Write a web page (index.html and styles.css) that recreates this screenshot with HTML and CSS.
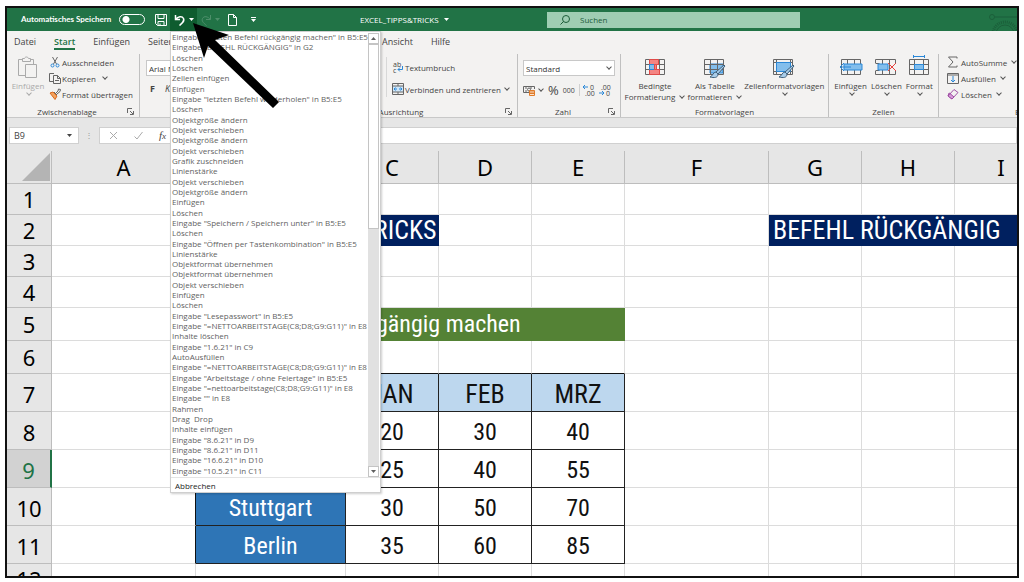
FILE: index.html
```html
<!DOCTYPE html>
<html lang="de">
<head>
  <meta charset="UTF-8" />
  <meta name="viewport" content="width=device-width, initial-scale=1.0" />
  <title>EXCEL_TIPPS&amp;TRICKS</title>
  <link rel="stylesheet" href="styles.css">
</head>
<body>
  <div class="window">

    <!-- Titelleiste -->
    <header class="titlebar">
      <div class="quick">
        <label class="autosave">Automatisches Speichern <input type="checkbox" class="switch" /></label>
        <button class="quick-btn" aria-label="Speichern">
          <svg width="12" height="12" viewBox="0 0 12 12"><path d="M.5.5h11v11h-9l-2-2zM3 .5v4h6v-4M3 11.500v-4h6v4M5 9.500v2" /></svg>
        </button>
        <div class="undo">
          <button class="quick-btn undo-btn" aria-label="Rückgängig">
            <svg width="12" height="12" viewBox="0 0 12 12"><path d="M1.500 1v4.500h4.500M1.500 5.500C4 2.500 8 1.500 9.500 4.500C10.500 7 9 8.500 5.500 11.500" /></svg>
            <svg width="5" height="3" viewBox="0 0 5 3"><path class="solid" d="M0 0h5L2.500 3z" /></svg>
          </button>
          <div class="menu">
            <div class="menu-body">
              <ul class="menu-list">
                <li>Eingabe "letzten Befehl rückgängig machen" in B5:E5</li>
                <li>Eingabe "BEFEHL RÜCKGÄNGIG" in G2</li>
                <li>Löschen</li>
                <li>Löschen</li>
                <li>Zellen einfügen</li>
                <li>Einfügen</li>
                <li>Eingabe "letzten Befehl wiederholen" in B5:E5</li>
                <li>Löschen</li>
                <li>Objektgröße ändern</li>
                <li>Objekt verschieben</li>
                <li>Objektgröße ändern</li>
                <li>Objekt verschieben</li>
                <li>Grafik zuschneiden</li>
                <li>Linienstärke</li>
                <li>Objekt verschieben</li>
                <li>Objektgröße ändern</li>
                <li>Einfügen</li>
                <li>Löschen</li>
                <li>Eingabe "Speichern / Speichern unter" in B5:E5</li>
                <li>Löschen</li>
                <li>Eingabe "Öffnen per Tastenkombination" in B5:E5</li>
                <li>Linienstärke</li>
                <li>Objektformat übernehmen</li>
                <li>Objektformat übernehmen</li>
                <li>Objekt verschieben</li>
                <li>Einfügen</li>
                <li>Löschen</li>
                <li>Eingabe "Lesepasswort" in B5:E5</li>
                <li>Eingabe "=NETTOARBEITSTAGE(C8;D8;G9:G11)" in E8</li>
                <li>Inhalte löschen</li>
                <li>Eingabe "1.6.21" in C9</li>
                <li>AutoAusfüllen</li>
                <li>Eingabe "=NETTOARBEITSTAGE(C8;D8;G9:G11)" in E8</li>
                <li>Eingabe "Arbeitstage / ohne Feiertage" in B5:E5</li>
                <li>Eingabe "=nettoarbeitstage(C8;D8;G9:G11)" in E8</li>
                <li>Eingabe "" in E8</li>
                <li>Rahmen</li>
                <li>Drag&nbsp; Drop</li>
                <li>Inhalte einfügen</li>
                <li>Eingabe "8.6.21" in D9</li>
                <li>Eingabe "8.6.21" in D11</li>
                <li>Eingabe "16.6.21" in D10</li>
                <li>Eingabe "10.5.21" in C11</li>
              </ul>
              <div class="scroll">
                <span class="scroll-end"><svg width="5" height="3" viewBox="0 0 5 3"><path class="solid" d="M0 3h5L2.500 0z" /></svg></span>
                <span class="scroll-thumb"></span>
                <span class="scroll-end scroll-down"><svg width="5" height="3" viewBox="0 0 5 3"><path class="solid" d="M0 0h5L2.500 3z" /></svg></span>
              </div>
            </div>
            <button class="menu-cancel">Abbrechen</button>
          </div>
          <svg class="pointer" width="86" height="86" viewBox="0 0 86 86"><path d="M0 0L36 12L22 17L86 79L80 85L15 23L11 35z" /></svg>
        </div>
        <button class="quick-btn faded" aria-label="Wiederholen">
          <svg width="12" height="12" viewBox="0 0 12 12"><path d="M10.500 1v4.500h-4.500M10.500 5.500C8 2.500 4 1.500 2.500 4.500C1.500 7 3 8.500 6.500 11.500" /></svg>
          <svg width="5" height="3" viewBox="0 0 5 3"><path class="solid" d="M0 0h5L2.500 3z" /></svg>
        </button>
        <button class="quick-btn" aria-label="Neu">
          <svg width="9" height="12" viewBox="0 0 9 12"><path d="M.5.5h5l3 3v8h-8zM5.500.5v3h3" /></svg>
        </button>
        <button class="quick-btn more" aria-label="Anpassen">
          <svg width="5" height="5" viewBox="0 0 5 5"><path class="solid" d="M0 0h5v1H0zM0 2h5L2.500 5z" /></svg>
        </button>
      </div>
      <div class="doc-name">EXCEL_TIPPS&amp;TRICKS <svg width="5" height="3" viewBox="0 0 5 3"><path class="solid" d="M0 0h5L2.500 3z" /></svg></div>
      <label class="search">
        <svg width="10" height="10" viewBox="0 0 10 10"><circle cx="6" cy="4" r="3.500" /><path d="M3.500 6.500L.5 9.500" /></svg>
        <input type="text" placeholder="Suchen" aria-label="Suchen" />
      </label>
      <svg class="deco" width="30" height="23" viewBox="0 0 30 23"><circle cx="5" cy="9" r="2.500" /><path d="M8 9h22" /><circle cx="18" cy="26" r="9" /><circle class="teeth" cx="18" cy="26" r="12" /></svg>
    </header>

    <!-- Registerkarten -->
    <nav class="tabs">
      <a href="#">Datei</a>
      <a href="#" class="active">Start</a>
      <a href="#">Einfügen</a>
      <a href="#" class="wide">Seitenlayout</a>
      <a href="#" class="medium">Formeln</a>
      <a href="#" class="medium">Daten</a>
      <a href="#" class="wide">Überprüfen</a>
      <a href="#">Ansicht</a>
      <a href="#">Hilfe</a>
    </nav>

    <!-- Menüband -->
    <div class="ribbon">
      <section class="group clipboard">
        <div class="tools">
          <button class="big faded">
            <svg width="22" height="24" viewBox="0 0 22 24"><path d="M6 3.500H1.500v16H8M13 3.500h3.500V8M5.500 5.500v-3h2C8 .5 11 .5 11.500 2.500h2v3zM8.500 8.500h11v13h-11z" /></svg>
            <span>Einfügen</span><i class="chev"></i>
          </button>
          <div class="stack">
            <button class="small"><svg width="12" height="12" viewBox="0 0 12 12"><path d="M3.500 1l4 7M8.500 1l-4 7" /><circle class="blue" cx="3.500" cy="9.500" r="1.500" /><circle class="blue" cx="8.500" cy="9.500" r="1.500" /></svg>Ausschneiden</button>
            <button class="small"><svg width="12" height="12" viewBox="0 0 12 12"><path d="M5 9.500H.5v-8H5M4.500 3.500h4l3 3v5h-7zM8.500 3.500v3h3M6 8.500h4" /></svg>Kopieren <i class="chev far"></i></button>
            <button class="small"><svg width="12" height="12" viewBox="0 0 12 12"><path class="orange-fill" d="M1 5l3-1 4 4-2 3.500z" /><path d="M5 4l3 3M6.500 5.500L9 3l.5-2 2 .500-.500 2L8 6" /></svg>Format übertragen</button>
          </div>
        </div>
        <footer><span>Zwischenablage</span><svg width="7" height="7" viewBox="0 0 7 7"><path d="M.5 5V.5H5M3 3l3 3M6.500 3v3.500H3" /></svg></footer>
      </section>

      <section class="group font">
        <div class="tools">
          <select aria-label="Schriftart"><option>Arial Narrow</option></select>
          <div class="row"><button class="bold">F</button><button class="italic">K</button></div>
        </div>
        <footer><span>Schriftart</span></footer>
      </section>

      <section class="group align">
        <div class="tools">
          <button class="small"><svg width="12" height="12" viewBox="0 0 12 12"><text x="1" y="6">ab</text><text x="1" y="12">c</text><path class="blue" d="M10.500 5v3.500H6M8 6.500l-2 2 2 2" /></svg>Textumbruch</button>
          <button class="small"><svg width="12" height="12" viewBox="0 0 12 12"><path class="blue-light" d="M0 3h12v6H0z" /><path d="M.5.5h11v11H.5zM6 .5V3M6 9v2.500M.5 3h11M.5 9h11" /><path class="blue" d="M2 6h3M7 6h3M3.500 4.500L2 6l1.500 1.500M8.500 4.500L10 6 8.500 7.500" /></svg>Verbinden und zentrieren <i class="chev"></i></button>
        </div>
        <footer><span>Ausrichtung</span><svg width="7" height="7" viewBox="0 0 7 7"><path d="M.5 5V.5H5M3 3l3 3M6.500 3v3.500H3" /></svg></footer>
      </section>

      <section class="group number">
        <div class="tools">
          <div class="combo">
            <select aria-label="Zahlenformat"><option>Standard</option></select>
            <i class="chev"></i>
          </div>
          <div class="row">
            <button aria-label="Buchhaltung"><svg width="13" height="11" viewBox="0 0 13 11"><path d="M6 7.500H.5v-6h11V4" /><path d="M2 3h2M2 6h2M7 3h2" /><circle cx="6" cy="4.500" r="1.500" /><path class="orange" d="M6.500 5.500h5v5h-5zM6.500 7h5M6.500 8.500h5" /></svg><i class="chev"></i></button>
            <button class="percent">%</button>
            <button class="thousand">000</button>
            <button class="split" aria-label="Dezimalstelle hinzufügen"><svg width="12" height="12" viewBox="0 0 12 12"><path class="blue" d="M0 3h5M2 1L0 3l2 2" /><text x="7" y="6">0</text><text x="2" y="12">.00</text></svg></button>
            <button aria-label="Dezimalstelle entfernen"><svg width="12" height="12" viewBox="0 0 12 12"><path class="blue" d="M0 9h5M3 7l2 2-2 2" /><text x="2" y="6">.00</text><text x="7" y="12">0</text></svg></button>
          </div>
        </div>
        <footer><span>Zahl</span><svg width="7" height="7" viewBox="0 0 7 7"><path d="M.5 5V.5H5M3 3l3 3M6.500 3v3.500H3" /></svg></footer>
      </section>

      <section class="group styles">
        <div class="tools">
          <button class="big">
            <svg width="20" height="20" viewBox="0 0 20 20"><path d="M.5.500h19v15H.5zM.5 5.500h19M.5 10.500h19M4.500.5v15M14.500.5v15" /><path class="red-fill" d="M4.500.5h9v5h-9zM4.500 10.500h10v5h-10z" /><path class="blue-fill" d="M4.500 5.500h5v5h-5z" /><path class="red-fill" d="M9.500 5.500h2v5h-2z" /></svg>
            <span>Bedingte<br />Formatierung <i class="chev"></i></span>
          </button>
          <button class="big">
            <svg width="22" height="20" viewBox="0 0 22 20"><path class="blue-fill" d="M6 5h13v9H6z" /><path d="M.5.5h19v15H.5zM.5 5.500h19M.5 10.500h19M6.500.5v15M13.500.5v15" /><path class="brush" d="M20 6l-8 7 2 2 7-8zM12 13c-3 0-3 4-6 5 4 1 8 1 8-3z" /></svg>
            <span>Als Tabelle<br />formatieren <i class="chev"></i></span>
          </button>
          <button class="big">
            <svg width="22" height="20" viewBox="0 0 22 20"><path d="M.5.5h19v15H.5zM.5 3.500h19M3.500.5v15M17.500.5v15M.5 12.500h19" /><path class="blue-fill" d="M3.500 3.500h14v9h-14z" /><path class="brush" d="M20 6l-8 7 2 2 7-8zM12 13c-3 0-3 4-6 5 4 1 8 1 8-3z" /></svg>
            <span>Zellenformatvorlagen</span><i class="chev"></i>
          </button>
        </div>
        <footer><span>Formatvorlagen</span></footer>
      </section>

      <section class="group cells">
        <div class="tools">
          <button class="big">
            <svg width="22" height="20" viewBox="0 0 22 20"><path d="M1.500.5h19v15h-19zM7.500.5v15M14.500.5v15" /><path class="blue-fill" d="M4 5h18v6H4z" /><path class="blue" d="M0 8h11M4 4L0 8l4 4" /></svg>
            <span>Einfügen</span><i class="chev"></i>
          </button>
          <button class="big">
            <svg width="22" height="20" viewBox="0 0 22 20"><path d="M.5 4V.5h20V4M.5 12v3.500h20V12M7.500.5v15M14.500.5v15M.5 4.500h4M.5 11.500h4" /><path class="blue-fill" d="M3 5h10v6H3z" /><path class="red" d="M13 4l8 8M21 4l-8 8" /></svg>
            <span>Löschen</span><i class="chev"></i>
          </button>
          <button class="big">
            <svg width="20" height="20" viewBox="0 0 20 20"><path d="M.5.5h19v15H.5zM.5 5.500h19M.5 10.500h19M5.500.5v15M14.500.5v15" /><path class="blue-fill" d="M5.500 5.500h9v5h-9z" /><path class="blue" d="M4.500-4v3M15.500-4v3M5-2.500h10" /></svg>
            <span>Format</span><i class="chev"></i>
          </button>
        </div>
        <footer><span>Zellen</span></footer>
      </section>

      <section class="group edit">
        <div class="tools stack">
          <button class="small"><svg width="12" height="12" viewBox="0 0 12 12"><path d="M10 2.500v-1.500H1.500L6 6 1.500 11H10V9.500" /></svg>AutoSumme <i class="chev"></i></button>
          <button class="small"><svg width="12" height="12" viewBox="0 0 12 12"><path d="M.5 1.500h11v10H.5zM.5 3h11" /><path class="blue" d="M6 4v6M4 8l2 2 2-2" /></svg>Ausfüllen<i class="chev"></i></button>
          <button class="small"><svg width="12" height="12" viewBox="0 0 12 12"><path class="purple" d="M1 8l6-6.500 4 3-6 6.500zM1 8l1-3 2 1" /><path class="purple-fill" d="M1 8l2-2.500 4 3.500-2 2z" /></svg>Löschen<i class="chev"></i></button>
        </div>
        <footer><span>Bearbeiten</span></footer>
      </section>
    </div>

    <!-- Bearbeitungsleiste -->
    <div class="formula">
      <label class="name-box"><input type="text" value="B9" aria-label="Namenfeld" /><svg width="5" height="3" viewBox="0 0 5 3"><path class="solid" d="M0 0h5L2.500 3z" /></svg></label>
      <span class="dots">⋮</span>
      <div class="formula-box">
        <svg width="9" height="9" viewBox="0 0 9 9"><path d="M1 1l7 7M8 1L1 8" /></svg>
        <svg width="9" height="9" viewBox="0 0 9 9"><path d="M.5 5.500L3 8l5.500-7" /></svg>
        <span class="fx">f<small>x</small></span>
        <input type="text" aria-label="Formel" />
      </div>
    </div>

    <!-- Tabellenblatt -->
    <table class="sheet">
      <colgroup>
        <col class="c-head" /><col class="c-wide" /><col class="c-b" /><col /><col /><col /><col class="c-wide" /><col /><col /><col />
      </colgroup>
      <thead>
        <tr>
          <th><svg class="corner" width="28" height="28" viewBox="0 0 28 28"><path class="solid" d="M28 0v28H0z" /></svg></th>
          <th>A</th><th>B</th><th>C</th><th>D</th><th>E</th><th>F</th><th>G</th><th>H</th><th>I</th>
        </tr>
      </thead>
      <tbody>
        <tr><th>1</th><td></td><td></td><td></td><td></td><td></td><td></td><td></td><td></td><td></td></tr>
        <tr><th>2</th><td></td><td colspan="2" class="navy">EXCEL TIPPS &amp; TRICKS</td><td></td><td></td><td></td><td colspan="3" class="navy">BEFEHL RÜCKGÄNGIG</td></tr>
        <tr><th>3</th><td></td><td></td><td></td><td></td><td></td><td></td><td></td><td></td><td></td></tr>
        <tr><th>4</th><td></td><td></td><td></td><td></td><td></td><td></td><td></td><td></td><td></td></tr>
        <tr class="mid"><th>5</th><td></td><td colspan="4" class="green">letzten Befehl rückgängig machen</td><td></td><td></td><td></td><td></td></tr>
        <tr class="mid"><th>6</th><td></td><td class="dark"></td><td class="dark"></td><td class="dark"></td><td class="dark"></td><td></td><td></td><td></td><td></td></tr>
        <tr class="tall month"><th>7</th><td class="edge"></td><td class="box"></td><td class="box">JAN</td><td class="box">FEB</td><td class="box">MRZ</td><td></td><td></td><td></td><td></td></tr>
        <tr class="tall"><th>8</th><td class="edge"></td><td class="box city">Hamburg</td><td class="box">20</td><td class="box">30</td><td class="box">40</td><td></td><td></td><td></td><td></td></tr>
        <tr class="tall"><th class="current">9</th><td class="edge"></td><td class="box city">München</td><td class="box">25</td><td class="box">40</td><td class="box">55</td><td></td><td></td><td></td><td></td></tr>
        <tr class="tall"><th>10</th><td class="edge"></td><td class="box city">Stuttgart</td><td class="box">30</td><td class="box">50</td><td class="box">70</td><td></td><td></td><td></td><td></td></tr>
        <tr class="tall"><th>11</th><td class="edge"></td><td class="box city">Berlin</td><td class="box">35</td><td class="box">60</td><td class="box">85</td><td></td><td></td><td></td><td></td></tr>
        <tr><th>12</th><td></td><td></td><td></td><td></td><td></td><td></td><td></td><td></td><td></td></tr>
      </tbody>
    </table>
  </div>
</body>
</html>
```
FILE: styles.css
```css
* {
  box-sizing: border-box;
}

body {
  margin: 0;
  padding: 6px 5px 4px;
  height: 100vh;
  background: #fff;
  color: #444;
  font-family: "Open Sans", "Noto Sans", sans-serif;
  font-size: 8px;
  line-height: 11px;
}

.window {
  height: 100%;
  border: 2px solid #111;
  overflow: hidden;
  background: #e6e6e6;
}

button,
input,
select {
  margin: 0;
  padding: 0;
  border: none;
  background: none;
  color: inherit;
  font: inherit;
}

svg {
  display: block;
  flex: none;
  fill: none;
  stroke: #666;
}

svg text {
  fill: #444;
  stroke: none;
  font-size: 7px;
}

.solid {
  fill: currentColor;
  stroke: none;
}

.blue {
  stroke: #2b88d8;
}

.blue-light {
  fill: #cfe6f8;
  stroke: none;
}

.blue-fill {
  fill: #83beec;
  stroke: #2b88d8;
}

.red {
  stroke: #e8403c;
}

.red-fill {
  fill: #f48482;
  stroke: #e04a48;
}

.orange {
  fill: #fbe3cf;
  stroke: #e07b28;
}

.orange-fill {
  fill: #f3a35f;
  stroke: #d9691e;
}

.purple {
  stroke: #a04fa5;
}

.purple-fill {
  fill: #d59bd8;
  stroke: #a04fa5;
}

.brush {
  fill: #a9cdea;
  stroke: #40617c;
}

.chev {
  display: inline-block;
  flex: none;
  width: 4px;
  height: 4px;
  margin: 0 1px 2px 3px;
  border: solid #555;
  border-width: 0 1px 1px 0;
  transform: rotate(45deg);
}

/* Titelleiste */
.titlebar {
  position: relative;
  display: grid;
  grid-template-columns: 353px 187px 1fr 217px;
  align-items: center;
  height: 23px;
  background: #217346;
  color: #fff;
}

.titlebar svg {
  stroke: #fff;
}

.quick {
  display: flex;
  align-items: center;
  height: 100%;
  padding-left: 14px;
}

.autosave {
  display: flex;
  align-items: center;
  width: 124px;
  margin-right: 7px;
  font-family: Lato, "Open Sans", sans-serif;
  font-weight: 700;
  white-space: nowrap;
}

.switch {
  appearance: none;
  width: 26px;
  height: 11px;
  margin-left: auto;
  border: 1px solid #fff;
  border-radius: 6px;
  background: radial-gradient(circle at 6px 50%, #fff 3px, transparent 4px);
}

.quick-btn {
  display: flex;
  align-items: center;
  justify-content: center;
  gap: 3px;
  height: 100%;
  width: 18px;
}

.quick-btn.faded {
  width: 26px;
  opacity: 0.2;
}

.more {
  width: 24px;
}

.undo {
  position: relative;
  height: 100%;
}

.undo-btn {
  width: 27px;
  background: #0e5c2f;
}

.undo-btn svg {
  stroke-width: 1.5;
}

.doc-name {
  display: flex;
  align-items: center;
  gap: 5px;
}

.search {
  display: flex;
  align-items: center;
  gap: 10px;
  height: 16px;
  padding-left: 13px;
  background: #9fcdb3;
  color: #1c5c39;
}

.search svg {
  stroke: #1c5c39;
}

.search input {
  flex: 1;
}

.search input::placeholder {
  color: #1c5c39;
  opacity: 1;
}

.titlebar .deco {
  justify-self: end;
  stroke: #1b5f3a;
}

.teeth {
  stroke-width: 3;
  stroke-dasharray: 1 1;
}

/* Liste unter dem Rückgängig-Pfeil */
.menu {
  position: absolute;
  z-index: 2;
  top: 100%;
  left: 0;
  width: 211px;
  border: 1px solid #cfcfcf;
  background: #fff;
  color: #5f5f5f;
  box-shadow: 1px 1px 2px rgba(0, 0, 0, 0.2);
}

.menu-body {
  display: flex;
  height: 445px;
}

.menu-list {
  display: grid;
  grid-auto-rows: 1fr;
  flex: 1;
  min-width: 0;
  margin: 0;
  padding: 0 0 1px 1px;
  list-style: none;
  line-height: 10px;
  white-space: nowrap;
}

.menu-list li {
  min-height: 0;
}

.scroll {
  display: flex;
  flex: none;
  flex-direction: column;
  width: 11px;
  margin: 1px 1px 0 0;
  background: #e1e1e1;
}

.scroll-end {
  display: flex;
  align-items: center;
  justify-content: center;
  height: 11px;
  border: 1px solid #c4c4c4;
  background: #fff;
}

.scroll-thumb {
  height: 185px;
  border: 1px solid #c4c4c4;
  background: #fff;
}

.scroll-down {
  margin-top: auto;
}

.menu-cancel {
  display: block;
  width: 100%;
  height: 15px;
  padding-left: 4px;
  border-top: 1px solid #e4e4e4;
  color: #222;
  text-align: left;
}

.titlebar .pointer {
  position: absolute;
  z-index: 3;
  top: 15px;
  left: 23px;
  fill: #000;
  stroke: none;
}

/* Registerkarten */
.tabs {
  display: flex;
  gap: 18px;
  height: 22px;
  padding: 5px 7px 0;
  background: #f3f2f1;
  font-size: 9px;
}

.tabs a {
  height: 14px;
  color: #444;
  text-decoration: none;
}

.tabs .active {
  border-bottom: 2px solid #217346;
  color: #217346;
  font-weight: 600;
}

.wide {
  width: 50px;
}

.medium {
  width: 31px;
}

/* Menüband */
.ribbon {
  display: flex;
  height: 65px;
  overflow: hidden;
  border-bottom: 1px solid #c8c8c8;
  background: #f3f2f1;
}

.group {
  display: flex;
  flex: none;
  flex-direction: column;
  justify-content: space-between;
  margin: 1px 0 0;
  border-right: 1px solid #c0c0c0;
  white-space: nowrap;
}

.tools,
.row {
  display: flex;
}

.group footer {
  display: flex;
  align-items: center;
}

.group footer span {
  flex: 1;
  text-align: center;
}

.group footer svg {
  margin-right: 5px;
}

.big {
  display: flex;
  flex-direction: column;
  align-items: center;
}

.big > svg {
  margin-bottom: 1px;
}

.small {
  display: flex;
  align-items: center;
  gap: 1px;
  height: 16px;
}

.stack {
  display: flex;
  flex-direction: column;
}

.clipboard {
  width: 133px;
}

.clipboard .big {
  width: 42px;
  padding-top: 2px;
  color: #aaa;
}

.clipboard .big > svg {
  margin-bottom: 0;
  stroke: #aaa;
}

.clipboard .big .chev {
  border-color: #aaa;
}

select {
  appearance: none;
  width: 100%;
  height: 16px;
  padding: 0 2px;
  border: 1px solid #c8c8c8;
  background: #fff;
  color: #333;
}

.combo {
  display: grid;
  align-items: center;
}

.combo > * {
  grid-area: 1 / 1;
}

.combo .chev {
  justify-self: end;
  margin-right: 4px;
}

.font {
  width: 157px;
}

.font .tools {
  flex-direction: column;
  gap: 7px;
  padding: 6px 6px 0;
}

.font .row {
  gap: 10px;
  padding-left: 4px;
  font-size: 9px;
}

.bold {
  font-weight: 700;
}

.italic {
  font-style: italic;
}

.align {
  width: 221px;
}

.align .tools {
  flex-direction: column;
  gap: 6px;
  margin: 3px 0 0 89px;
  padding: 2px 0 0 5px;
  border-left: 1px solid #d8d8d8;
}

.number {
  width: 103px;
}

.number .tools {
  flex-direction: column;
  gap: 6px;
  padding: 6px 5px 0;
}

.number .row {
  align-items: center;
  gap: 4px;
  height: 16px;
}

.number .row button {
  display: flex;
  align-items: center;
}

.number svg,
.align svg {
  overflow: visible;
}

.number .percent {
  font-size: 13px;
}

.number .thousand {
  font-size: 7px;
}

.number .split {
  padding-left: 3px;
  border-left: 1px solid #d0d0d0;
}

.styles {
  width: 208px;
}

.styles .tools,
.cells .tools {
  align-items: flex-start;
  justify-content: center;
  gap: 2px;
  padding-top: 5px;
}

.cells .tools {
  gap: 4px;
}

.cells svg {
  overflow: visible;
}

.cells {
  width: 110px;
}

.edit {
  width: 186px;
  padding-left: 8px;
}

.edit .small {
  gap: 2px;
}

.far {
  margin-left: 6px;
}

/* Bearbeitungsleiste */
.formula {
  display: flex;
  height: 33px;
  padding: 9px 0 7px 2px;
}

.name-box {
  display: flex;
  align-items: center;
  width: 70px;
  padding: 0 6px 0 4px;
  border: 1px solid #d0d0d0;
  background: #fff;
  font-size: 9px;
}

.name-box input {
  flex: 1;
  min-width: 0;
}

.dots {
  width: 20px;
  color: #999;
  line-height: 16px;
  text-align: center;
}

.formula-box {
  display: flex;
  align-items: center;
  gap: 16px;
  flex: 1;
  padding-left: 9px;
  border: 1px solid #d0d0d0;
  background: #fff;
}

.formula-box svg {
  stroke: #aaa;
}

.formula-box input {
  flex: 1;
}

.fx {
  font-family: "Liberation Serif", serif;
  font-size: 11px;
  font-style: italic;
}

/* Tabellenblatt */
.sheet {
  width: 1041px;
  min-width: 100%;
  border-spacing: 0;
  table-layout: fixed;
  background: #fff;
  color: #111;
  font-family: "Arial Narrow", "Roboto Condensed", "Liberation Sans", sans-serif;
  font-size: 24px;
  line-height: 28px;
}

.sheet col {
  width: 93px;
}

.sheet .c-head {
  width: 45px;
}

.sheet .c-wide {
  width: 144px;
}

.sheet .c-b {
  width: 150px;
}

.sheet th,
.sheet td {
  height: 31px;
  padding: 0;
  border: solid #dcdcdc;
  border-width: 0 1px 1px 0;
  text-align: center;
  white-space: nowrap;
}

.sheet th {
  border-color: #bdbdbd;
  background: #e6e6e6;
  color: #000;
  font-family: "Noto Sans", "Open Sans", sans-serif;
  font-size: 22px;
  font-weight: 400;
}

.sheet thead th {
  height: 33px;
}

.corner {
  margin-left: 15px;
  color: #b4b4b4;
}

.sheet .mid > * {
  height: 33px;
}

.sheet .tall > * {
  height: 38px;
  padding-top: 3px;
}

.sheet .navy,
.sheet .green {
  padding-left: 4px;
  border-color: transparent;
  background: #00205f;
  color: #fff;
  text-align: left;
}

.sheet .green {
  background: #548235;
}

.sheet .navy,
.sheet .month td {
  font-size: 26px;
}

.sheet .dark {
  border-bottom-color: #111;
}

.sheet .edge {
  border-right-color: #111;
}

.sheet .box {
  border-color: #222;
}

.month .box {
  background: #bdd7ee;
}

.sheet .city {
  background: #2e75b6;
  color: #fff;
}

.sheet .current {
  border-right: 2px solid #217346;
  background: #d2d2d2;
  color: #217346;
}
```
